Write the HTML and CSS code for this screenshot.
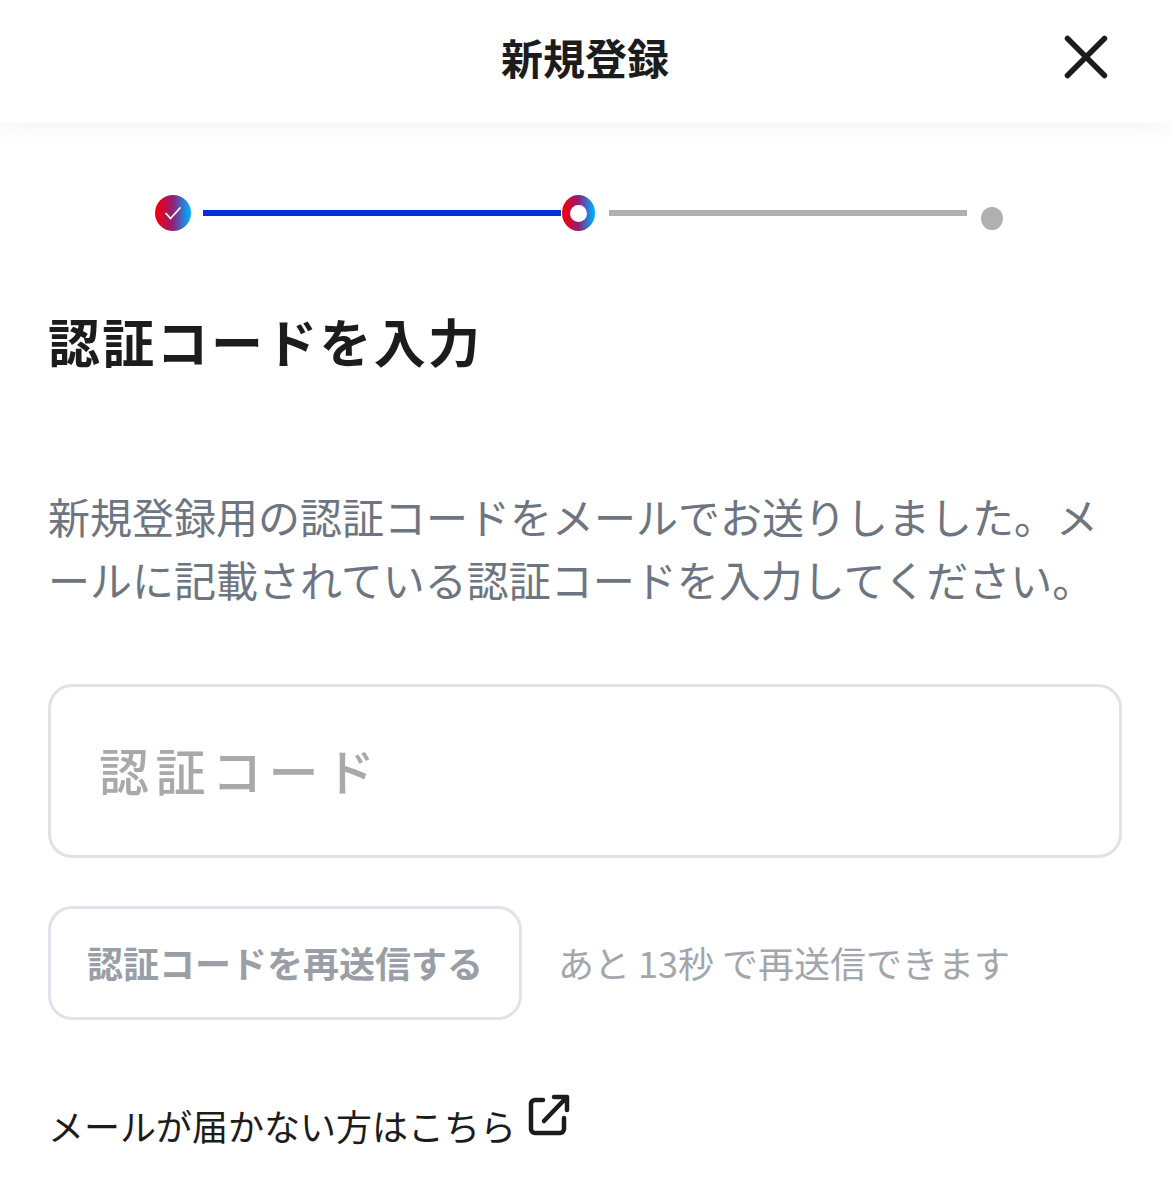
FILE: index.html
```html
<!DOCTYPE html>
<html lang="ja">
<head>
  <meta charset="UTF-8" />
  <meta name="viewport" content="width=device-width, initial-scale=1.0"/>
  <title>新規登録</title>
  <link rel="stylesheet" href="styles.css">
</head>
<body>
  <header class="header">
    <h1>新規登録</h1>
    <button class="close" aria-label="閉じる">
      <svg width="44" height="44" viewBox="0 0 44 44" fill="none" stroke="#1c1c1c" stroke-width="5.5" stroke-linecap="round">
        <path d="M3.5 3.5L40.5 40.5M40.5 3.5L3.5 40.5"/>
      </svg>
    </button>
  </header>

  <div class="steps">
    <div class="step step-done">
      <svg width="18" height="14" viewBox="0 0 18 14" fill="none" stroke="#fff" stroke-width="1.8" stroke-linecap="round" stroke-linejoin="round">
        <path d="M2 7.5L6.5 12.5L16 2"/>
      </svg>
    </div>
    <div class="line line-done"></div>
    <div class="step step-current"><span></span></div>
    <div class="line"></div>
    <div class="step-next"></div>
  </div>

  <main class="content">
    <h2>認証コードを入力</h2>
    <p class="lead">新規登録用の認証コードをメールでお送りしました。メールに記載されている認証コードを入力してください。</p>
    <input class="code" type="text" placeholder="認証コード" />
    <div class="resend">
      <button class="resend-btn">認証コードを再送信する</button>
      <span class="resend-note">あと 13秒 で再送信できます</span>
    </div>
    <a class="help" href="#">メールが届かない方はこちら
      <svg width="42" height="42" viewBox="0 0 42 42" fill="none" stroke="#1c1c1c" stroke-width="4.5" stroke-linecap="round" stroke-linejoin="round">
        <path d="M15 6H7a4 4 0 0 0-4 4v25a4 4 0 0 0 4 4h25a4 4 0 0 0 4-4V24"/>
        <path d="M16 27L38 4M26 3H39V16"/>
      </svg>
    </a>
  </main>
</body>
</html>
```

FILE: styles.css
```css
* {
  box-sizing: border-box;
}
body {
  font-family: "Noto Sans CJK JP", "Noto Sans", sans-serif;
  background: #fff;
  margin: 0;
  color: #1c1c1c;
}
.header {
  height: 123px;
  display: flex;
  align-items: center;
  justify-content: center;
  position: relative;
  box-shadow: 0 4px 24px rgba(0,0,0,0.05);
}
.header h1 {
  font-size: 42px;
  font-weight: 700;
  margin: 0;
  padding-bottom: 10px;
}
.close {
  position: absolute;
  top: 35px;
  right: 62px;
  padding: 0;
  border: none;
  background: none;
  display: flex;
}
.steps {
  display: flex;
  padding: 72px 0 0 155px;
  height: 178px;
  align-items: flex-start;
}
.step {
  width: 36px;
  height: 36px;
  border-radius: 50%;
  background: linear-gradient(90deg, #ee0014 8%, #8f2078 50%, #00a8ff 94%);
  display: flex;
  align-items: center;
  justify-content: center;
  flex-shrink: 0;
}
.step-current {
  width: 33px;
  height: 36px;
  margin-left: 1px;
}
.step-current span {
  width: 17px;
  height: 17px;
  border-radius: 50%;
  background: #fff;
}
.line {
  width: 358px;
  height: 6px;
  margin: 15px 14px 0 14px;
  background: #b0b0b0;
}
.line-done {
  background: #0032d8;
  margin: 15px 0 0 12px;
}
.step-next {
  width: 22px;
  height: 23px;
  margin-top: 12px;
  border-radius: 50%;
  background: #b0b0b0;
}
.content {
  padding: 0 48px;
}
h2 {
  font-size: 52px;
  font-weight: 700;
  letter-spacing: 2.3px;
  line-height: 80px;
  margin: 0;
}
.lead {
  font-size: 42px;
  line-height: 63px;
  color: #6e7582;
  margin: 103px 0 0;
}
.code {
  display: block;
  width: 100%;
  height: 174px;
  margin-top: 74px;
  padding: 0 49px 5px 48px;
  border: 3px solid #e2e2e2;
  border-radius: 24px;
  font-family: inherit;
  font-size: 50px;
  font-weight: 500;
  letter-spacing: 6.5px;
  outline: none;
}
.code::placeholder {
  color: #a9a9a9;
  opacity: 1;
}
.resend {
  display: flex;
  align-items: center;
  gap: 36px;
  margin-top: 48px;
}
.resend-btn {
  width: 474px;
  height: 114px;
  padding: 0 0 2px;
  background: #fff;
  border: 3px solid #e1e3ec;
  border-radius: 24px;
  font-family: inherit;
  font-size: 36px;
  font-weight: 700;
  color: #9a9fa7;
}
.resend-note {
  font-size: 36px;
  color: #a2a6ad;
  padding-bottom: 2px;
}
.help {
  display: flex;
  align-items: flex-start;
  gap: 12px;
  margin: 79px 0 0;
  font-size: 36px;
  line-height: 52px;
  color: #1c1c1c;
  text-decoration: none;
}
.help svg {
  margin-top: -5px;
}
```
